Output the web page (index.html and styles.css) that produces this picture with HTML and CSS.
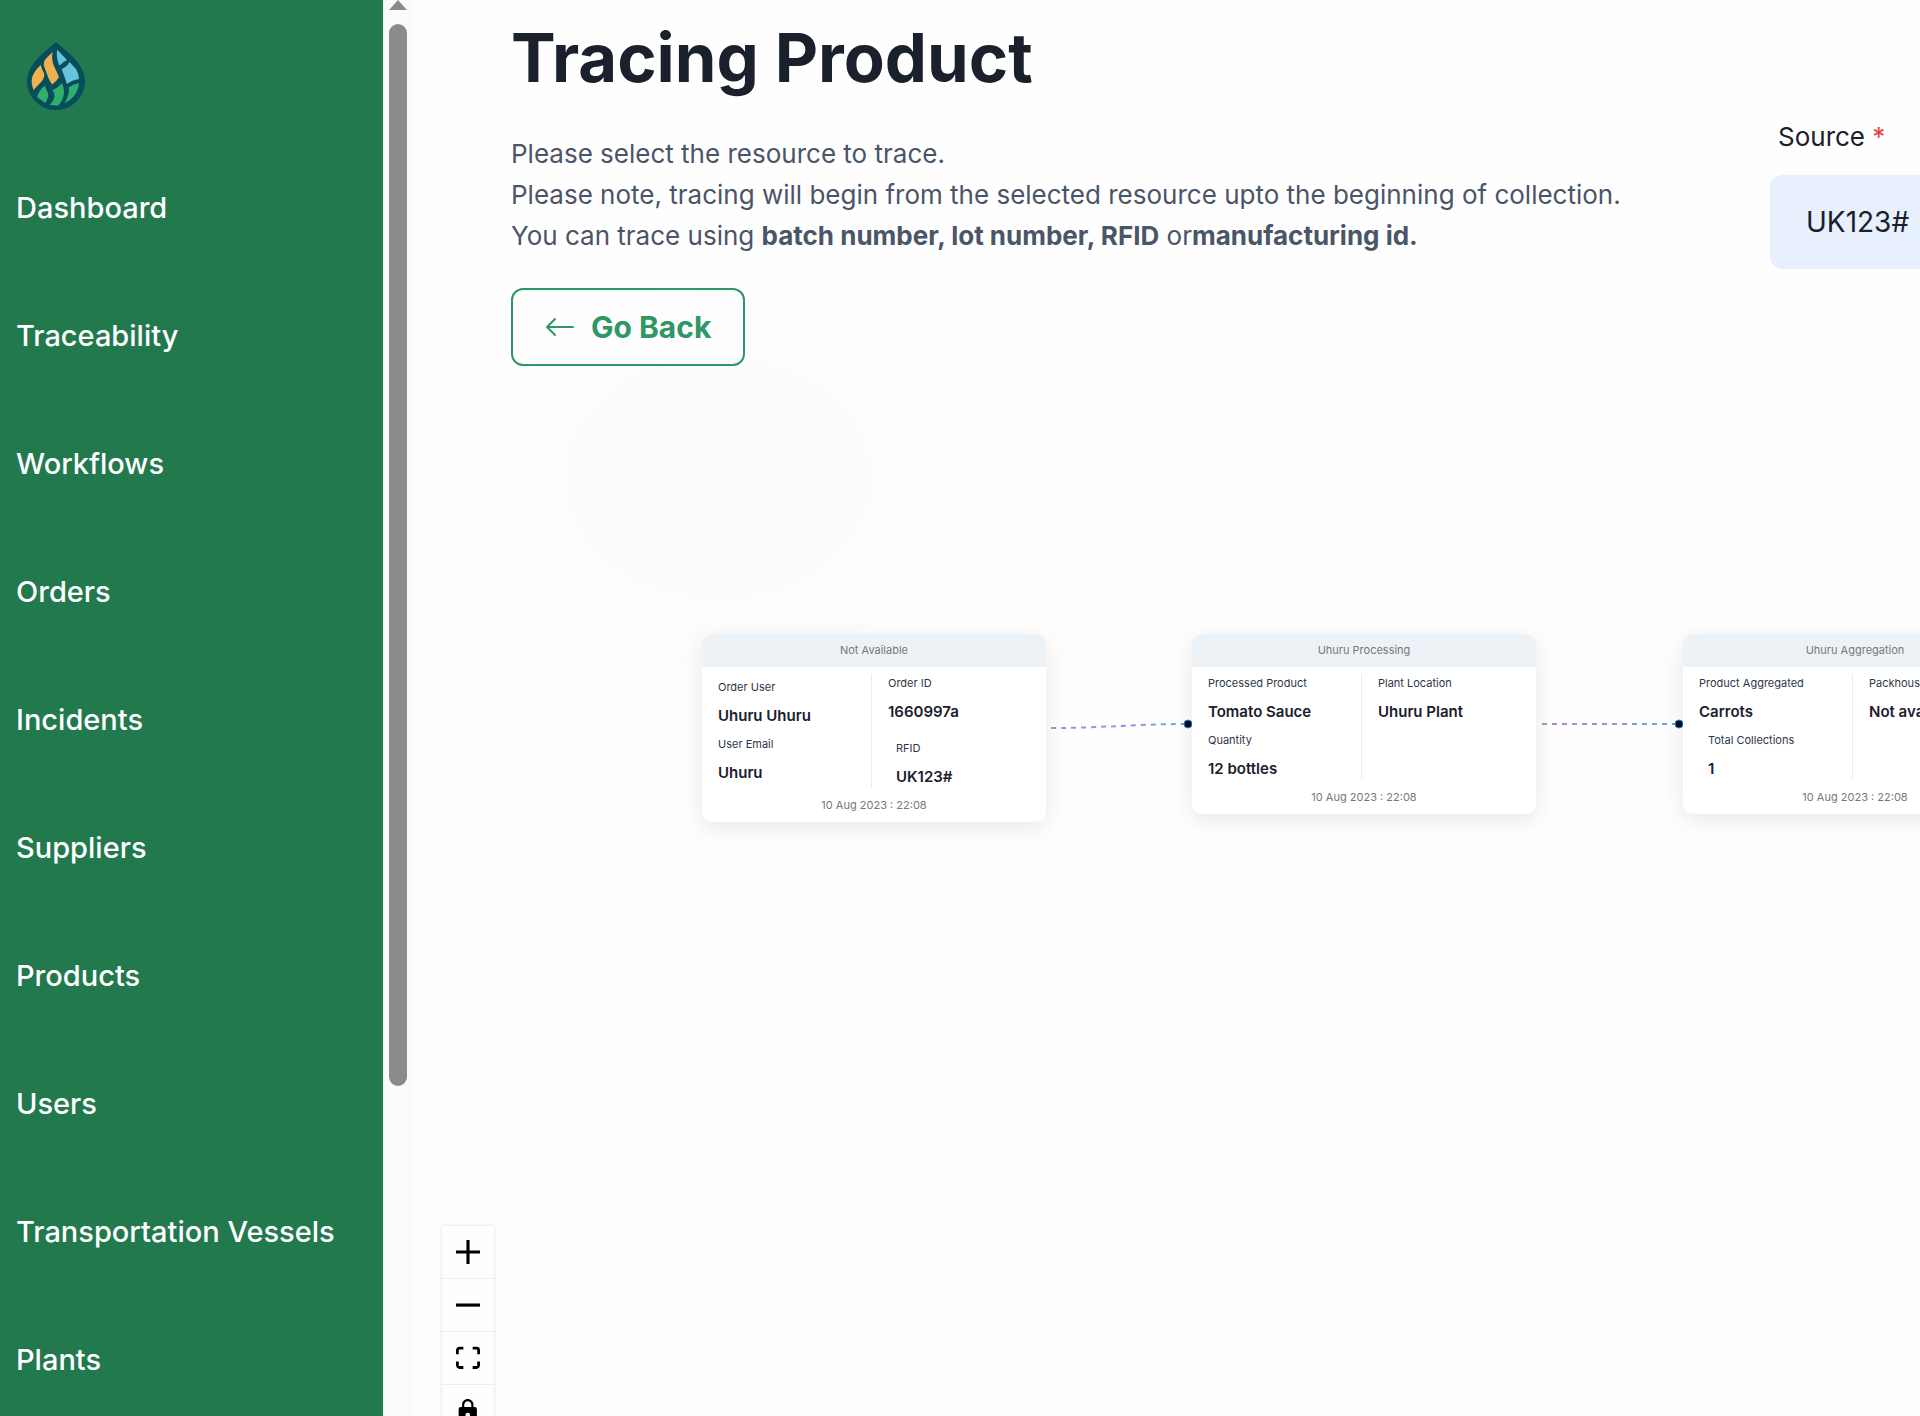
FILE: index.html
```html
<!DOCTYPE html>
<html lang="en">
<head>
    <meta charset="UTF-8">
    <meta name="viewport" content="width=device-width, initial-scale=1.0">
    <title>Tracing Product</title>
    <link rel="stylesheet" href="styles.css">
</head>
<body>
    <nav class="sidebar">
        <a href="#" class="logo" aria-label="Home">
            <svg width="60" height="70" viewBox="0 0 60 70">
                <path d="M30 4C26 9 3.500 22 3.500 40a26.500 26.500 0 0 0 53 0C56.500 22 34 9 30 4z" fill="#064e5b" stroke="#064e5b" stroke-width="5" stroke-linejoin="round"/>
                <path d="M14.700 24Q16 29 18 32 19 36 16 40L7.500 49Q5 42 6 37 8 30 14.700 24z" fill="#efb04f"/>
                <path d="M26.700 11Q25 18 28 25L33 36Q31 40 26 43.500 24 41 22 36L18 25Q17 21 20 17.500z" fill="#efb04f"/>
                <path d="M31 8.500 41 19Q37 21 33.500 24.500 30 17 31 8.500z" fill="#66c5da"/>
                <path d="M43.500 21 50 28Q53 33 53 38 46 39 41 43L35.700 28Q41 26 43.500 21z" fill="#66c5da"/>
                <path d="M19 44.500Q20 49 22 52 23 57 19 62L11 56Q13 49 19 44.500z" fill="#31ad6d"/>
                <path d="M36 42Q39 49 37.500 55 36 61 32 64.500L23.500 64Q29 59 28.500 53L26.500 49Q32 47 36 42z" fill="#31ad6d"/>
                <path d="M53 42Q52 50 48 55 44 60 38 62.500 42 57 43 50L42.500 46.500Q47 43 53 42z" fill="#31ad6d"/>
            </svg>
        </a>
        <a href="#">Dashboard</a>
        <a href="#">Traceability</a>
        <a href="#">Workflows</a>
        <a href="#">Orders</a>
        <a href="#">Incidents</a>
        <a href="#">Suppliers</a>
        <a href="#">Products</a>
        <a href="#">Users</a>
        <a href="#">Transportation Vessels</a>
        <a href="#">Plants</a>
    </nav>
    <div class="scrollbar">
        <div class="scroll-arrow"></div>
        <div class="scroll-thumb"></div>
    </div>
    <main>
        <header class="page-header">
            <div class="intro">
                <h1>Tracing Product</h1>
                <p>
                    Please select the resource to trace.<br>
                    Please note, tracing will begin from the selected resource upto the beginning of collection.<br>
                    You can trace using <b>batch number, lot number, RFID</b> or<b>manufacturing id.</b>
                </p>
                <button class="back-btn">
                    <svg width="30" height="20" viewBox="0 0 30 20" fill="none" stroke="currentColor" stroke-width="2" stroke-linecap="round" stroke-linejoin="round">
                        <path d="M28 10H2M10 2 2 10l8 8"/>
                    </svg>
                    Go Back
                </button>
            </div>
            <form class="source-form">
                <label for="source">Source <span class="required">*</span></label>
                <input type="text" id="source" value="UK123#">
            </form>
        </header>

        <div class="canvas">
            <svg class="edges" width="1600" height="400">
                <defs>
                    <linearGradient id="edge1" gradientUnits="userSpaceOnUse" x1="638" y1="0" x2="775" y2="0">
                        <stop offset="0" stop-color="#bd86c8"/>
                        <stop offset="1" stop-color="#6ba3f0"/>
                    </linearGradient>
                    <linearGradient id="edge2" gradientUnits="userSpaceOnUse" x1="1129" y1="0" x2="1266" y2="0">
                        <stop offset="0" stop-color="#bd86c8"/>
                        <stop offset="1" stop-color="#6ba3f0"/>
                    </linearGradient>
                </defs>
                <g fill="none" stroke-width="2" stroke-dasharray="5 5">
                    <path d="M638 349C690 349 722 345 775 345" stroke="url(#edge1)"/>
                    <path d="M1129 345H1266" stroke="url(#edge2)"/>
                </g>
                <g fill="#020d1c" stroke="#2f86e6">
                    <circle cx="775" cy="345" r="4"/>
                    <circle cx="1266" cy="345" r="4"/>
                </g>
            </svg>

            <article class="node node-order">
                <h2>Not Available</h2>
                <div class="node-body">
                    <dl>
                        <dt>Order User</dt>
                        <dd>Uhuru Uhuru</dd>
                        <dt>User Email</dt>
                        <dd>Uhuru</dd>
                    </dl>
                    <dl>
                        <dt>Order ID</dt>
                        <dd>1660997a</dd>
                        <div class="boxed">
                            <dt>RFID</dt>
                            <dd>UK123#</dd>
                        </div>
                    </dl>
                </div>
                <time>10 Aug 2023 : 22:08</time>
            </article>

            <article class="node node-processing">
                <h2>Uhuru Processing</h2>
                <div class="node-body">
                    <dl>
                        <dt>Processed Product</dt>
                        <dd>Tomato Sauce</dd>
                        <dt>Quantity</dt>
                        <dd>12 bottles</dd>
                    </dl>
                    <dl class="top">
                        <dt>Plant Location</dt>
                        <dd>Uhuru Plant</dd>
                    </dl>
                </div>
                <time>10 Aug 2023 : 22:08</time>
            </article>

            <article class="node node-aggregation">
                <h2>Uhuru Aggregation</h2>
                <div class="node-body">
                    <dl>
                        <dt>Product Aggregated</dt>
                        <dd>Carrots</dd>
                        <div class="indented">
                            <dt>Total Collections</dt>
                            <dd>1</dd>
                        </div>
                    </dl>
                    <dl class="top">
                        <dt>Packhouse</dt>
                        <dd>Not available</dd>
                    </dl>
                </div>
                <time>10 Aug 2023 : 22:08</time>
            </article>

            <div class="controls">
                <button aria-label="zoom in">
                    <svg width="24" height="24" viewBox="0 0 32 32"><path d="M32 18.1H18.1V32h-4.2V18.1H0v-4.2h13.9V0h4.2v13.9H32z"/></svg>
                </button>
                <button aria-label="zoom out">
                    <svg width="24" height="24" viewBox="0 0 32 32"><path d="M0 14h32v4.2H0z"/></svg>
                </button>
                <button aria-label="fit view">
                    <svg width="24" height="24" viewBox="0 0 32 30"><path d="M3.692 4.63c0-.53.4-.938.939-.938h5.215V0H4.708C2.13 0 0 2.054 0 4.63v5.216h3.692V4.631zM27.354 0h-5.2v3.692h5.17c.53 0 .984.4.984.939v5.215H32V4.631A4.624 4.624 0 0 0 27.354 0zm.954 24.83c0 .532-.4.94-.939.94h-5.215v3.768h5.215c2.577 0 4.631-2.13 4.631-4.707v-5.139h-3.692v5.139zm-23.677.94a.919.919 0 0 1-.939-.94v-5.138H0v5.139c0 2.577 2.13 4.707 4.708 4.707h5.138V25.77H4.631z"/></svg>
                </button>
                <button aria-label="toggle interactivity">
                    <svg width="24" height="24" viewBox="0 0 25 32"><path d="M21.333 10.667H19.81V7.619C19.81 3.429 16.38 0 12.19 0 8 0 4.571 3.429 4.571 7.619v3.048H3.048A3.056 3.056 0 0 0 0 13.714v15.238A3.056 3.056 0 0 0 3.048 32h18.285a3.056 3.056 0 0 0 3.048-3.048V13.714a3.056 3.056 0 0 0-3.048-3.047zM12.19 24.533a3.056 3.056 0 0 1-3.047-3.047 3.056 3.056 0 0 1 3.047-3.048 3.056 3.056 0 0 1 3.048 3.048 3.056 3.056 0 0 1-3.048 3.047zm4.724-13.866H7.467V7.619c0-2.59 2.133-4.724 4.723-4.724 2.591 0 4.724 2.133 4.724 4.724v3.048z"/></svg>
                </button>
            </div>
        </div>
    </main>
</body>
</html>
```

FILE: styles.css
```css
*{
    box-sizing: border-box;
}
body{
    display: flex;
    height: 100vh;
    margin: 0;
    overflow: hidden;
    font-family: Inter, "Liberation Sans", sans-serif;
    color: #1a202c;
    background-color: #fefefe;
}
button, input{
    font-family: inherit;
}

/* sidebar */
.sidebar{
    flex: 0 0 383px;
    display: flex;
    flex-direction: column;
    overflow: hidden;
    background-color: #22794e;
}
.sidebar a{
    flex: none;
    padding: 44px 16px;
    font-size: 29px;
    line-height: 40px;
    font-weight: 500;
    color: #fff;
    text-decoration: none;
}
.sidebar .logo{
    padding: 41px 26px 33px;
    line-height: 0;
}
.scrollbar{
    flex: 0 0 30px;
    display: flex;
    flex-direction: column;
    align-items: flex-start;
    gap: 14px;
    padding-left: 6px;
    background-color: #fbfbfb;
}
.scroll-arrow{
    border: 9px solid transparent;
    border-top: 0;
    border-bottom: 10px solid #8b8b8b;
}
.scroll-thumb{
    width: 18px;
    height: 75%;
    border-radius: 9px;
    background-color: #8b8b8b;
}

/* page header */
main{
    flex: 1;
    min-width: 0;
    display: flex;
    flex-direction: column;
    overflow: hidden;
    background-image: radial-gradient(ellipse 240px 190px at 305px 478px, #fbfbfc 31%, #fcfcfd 32%, #fcfcfd 64%, #fdfdfe 65%, #fdfdfe 99%, #fefefe 100%);
}
.page-header{
    display: flex;
    padding: 18px 0 13px 98px;
}
.intro{
    flex: 1;
}
h1{
    margin: 0;
    font-size: 67px;
    line-height: 80px;
    font-weight: 700;
}
.intro p{
    margin: 35px 0 32px;
    font-size: 26px;
    line-height: 41px;
    color: #4a5568;
}
.back-btn{
    display: flex;
    align-items: center;
    gap: 16px;
    height: 78px;
    padding: 0 32px;
    border: 2px solid #2f9666;
    border-radius: 12px;
    background: none;
    font-size: 30px;
    font-weight: 700;
    color: #2f9666;
}
.source-form{
    flex: 0 0 150px;
    min-width: 0;
    padding-top: 98px;
}
.source-form label{
    display: block;
    padding-left: 8px;
    font-size: 26px;
    line-height: 41px;
    white-space: nowrap;
}
.required{
    color: #e53e3e;
}
.source-form input{
    width: 360px;
    height: 94px;
    margin-top: 18px;
    padding: 0 36px;
    border: 0;
    border-radius: 12px;
    background-color: #e8f0fe;
    font-size: 28px;
    color: #1a202c;
}

/* flow canvas */
.canvas{
    flex: 1;
    position: relative;
}
.edges{
    position: absolute;
    top: 0;
    left: 0;
}
.node{
    position: absolute;
    top: 255px;
    width: 344px;
    padding-bottom: 9px;
    border-radius: 10px;
    background-color: #fff;
    box-shadow: 0 6px 24px rgba(0, 0, 0, 0.09);
    font-size: 11px;
}
.node-order{left: 289px;}
.node-processing{left: 779px;}
.node-aggregation{left: 1270px;}
.node h2{
    margin: 0;
    border-radius: 10px 10px 0 0;
    background-color: #edf2f7;
    font-size: 11px;
    line-height: 33px;
    font-weight: 400;
    text-align: center;
    color: #777;
}
.node-body{
    display: flex;
    padding: 2px 0 6px;
}
.node dl{
    flex: 1;
    align-self: center;
    margin: 0;
    padding-left: 16px;
}
.node dl.top{
    align-self: flex-start;
}
/* divider between the two columns */
.node-body::before{
    content: "";
    order: 1;
    width: 1px;
    margin: 5px 0 3px;
    background-color: #e8ecf0;
}
.node dl:last-child{
    order: 2;
    flex: 0 0 174px;
}
.node dt{
    line-height: 28px;
    color: #2d3748;
}
.node dd{
    margin: 0;
    font-size: 15px;
    line-height: 29px;
    font-weight: 600;
}
.boxed{
    padding: 8px 8px 0;
}
.indented{
    padding-left: 9px;
}
.node time{
    display: block;
    line-height: 16px;
    text-align: center;
    color: #777;
}

/* zoom controls */
.controls{
    position: absolute;
    left: 29px;
    bottom: -22px;
    display: flex;
    flex-direction: column;
    box-shadow: 0 0 2px 1px rgba(0, 0, 0, 0.08);
}
.controls button{
    display: flex;
    align-items: center;
    justify-content: center;
    width: 52px;
    height: 53px;
    padding: 0;
    border: 0;
    border-bottom: 1px solid #eee;
    background-color: #fefefe;
}
```
